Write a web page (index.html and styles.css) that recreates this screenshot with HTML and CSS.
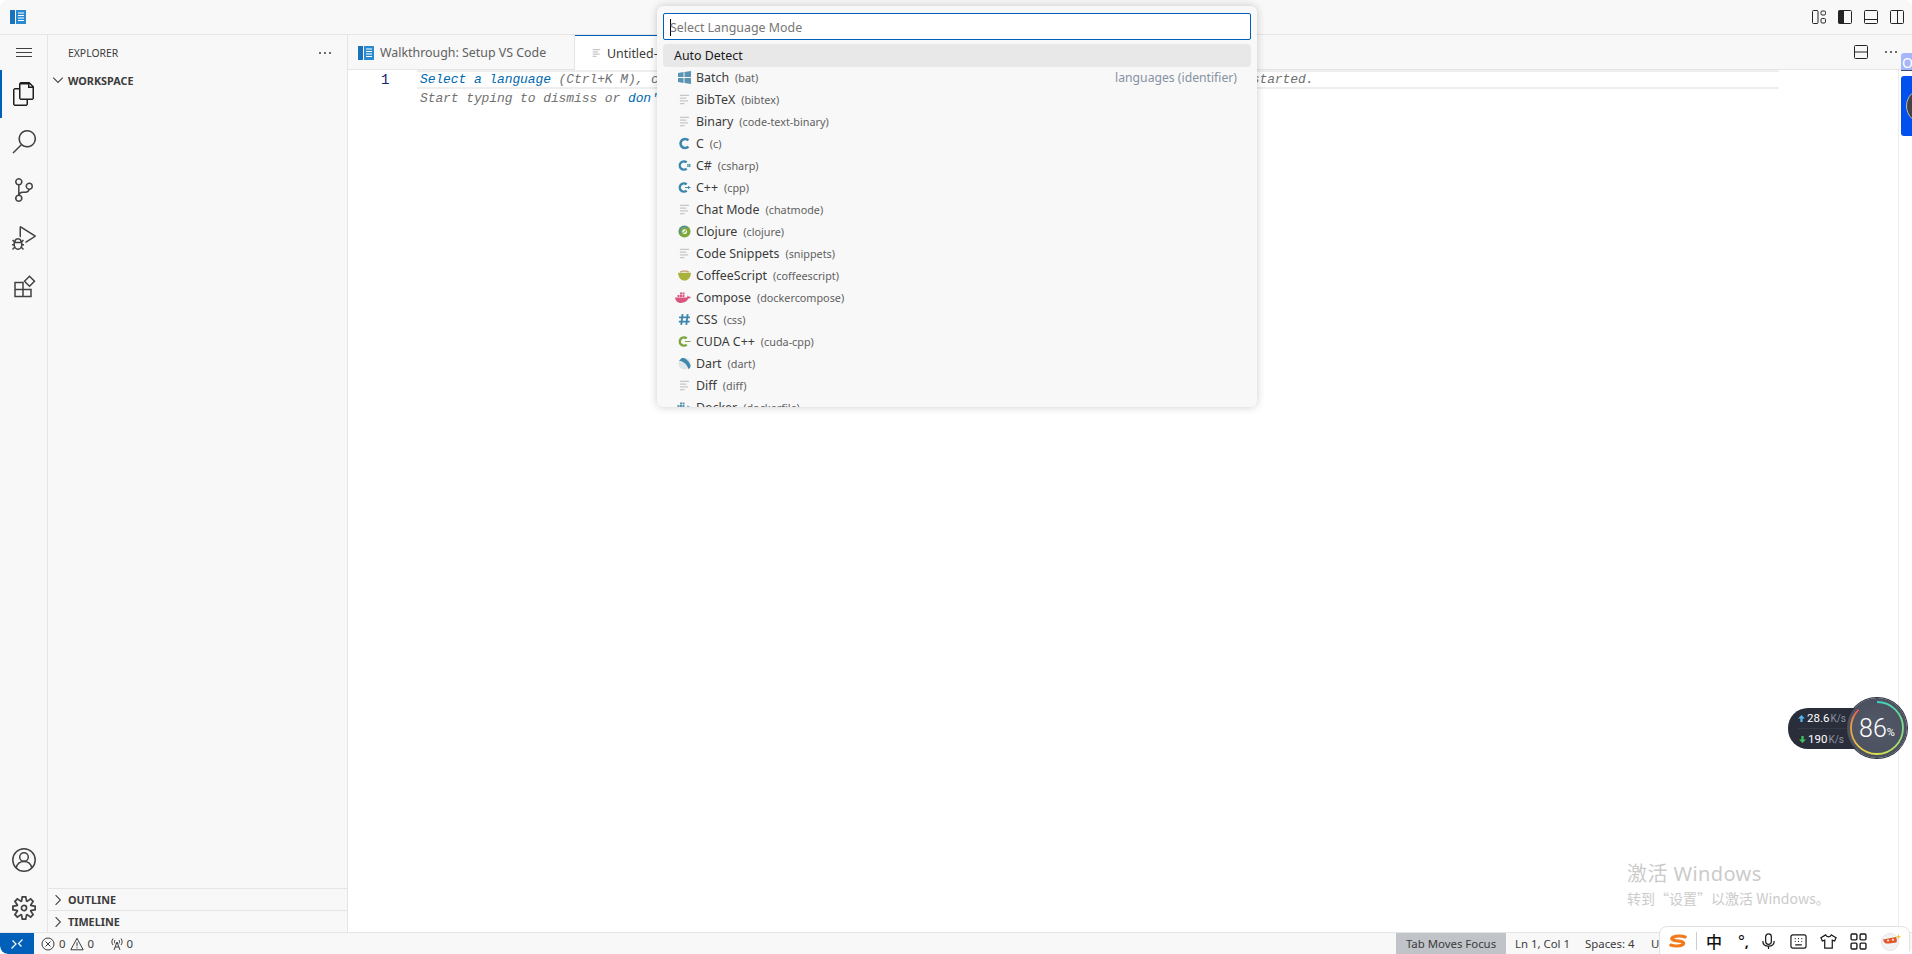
FILE: index.html
```html
<!DOCTYPE html>
<html lang="en">
<head>
<meta charset="utf-8">
<title>Walkthrough: Setup VS Code</title>
<link rel="stylesheet" href="styles.css">
</head>
<body>
<svg class="sprite" aria-hidden="true">
  <symbol id="book" viewBox="0 0 16 14"><rect x="0" y="0" width="5" height="14" fill="#1a73ba"/><rect x="6" y="0" width="10" height="14" fill="#2b8ad0"/><path d="M8 3h6M8 5.5h6M8 8h6M8 10.5h6" stroke="#fff" stroke-width="1"/></symbol>
  <symbol id="doc" viewBox="0 0 12 12"><path d="M1 1.5h10M1 4.5h7M1 7.5h9M1 10.5h5" stroke="#c6c6c6" stroke-width="1.4" fill="none"/></symbol>
  <symbol id="win" viewBox="0 0 14 14"><path d="M0 2.2l6-1v5.3H0zM7 1l7-1v6.5H7zM0 7.5h6v5.3l-6-1zM7 7.5h7V14l-7-1z" fill="#5a93b3"/></symbol>
  <symbol id="c" viewBox="0 0 12 12"><path d="M9.6 3.1A4.2 4.2 0 1 0 9.6 8.9" stroke="#3d87ac" stroke-width="2.4" fill="none"/></symbol>
  <symbol id="cs" viewBox="0 0 12 12"><path d="M8 3.2A3.8 3.8 0 1 0 8 8.8" stroke="#3d87ac" stroke-width="2.2" fill="none"/><path d="M9.2 4.500v3M10.700 4.500v3M8.300 5.300h3.400M8.300 6.800h3.400" stroke="#3d87ac" stroke-width=".7"/></symbol>
  <symbol id="cpp" viewBox="0 0 12 12"><path d="M8 3.200A3.800 3.800 0 1 0 8 8.800" stroke="#3d87ac" stroke-width="2.2" fill="none"/><path d="M6.500 6h5.100M9.800 4.600v2.800" stroke="#3d87ac" stroke-width=".9"/></symbol>
  <symbol id="cuda" viewBox="0 0 12 12"><path d="M8 3.200A3.800 3.800 0 1 0 8 8.800" stroke="#79a63a" stroke-width="2.2" fill="none"/><path d="M6.500 6h5.100" stroke="#79a63a" stroke-width=".9"/></symbol>
  <symbol id="clj" viewBox="0 0 12 12"><circle cx="6" cy="6" r="5.600" fill="#7fa83a"/><path d="M2.400 8A4.200 4.200 0 0 1 8.800 2.600" stroke="#4f8fb0" stroke-width="1.500" fill="none"/><circle cx="6.200" cy="6.200" r="2.300" fill="#eef3e2"/><path d="M5 7.500C6 6.500 6.500 5.500 7.500 5" stroke="#7fa83a" stroke-width="1"/></symbol>
  <symbol id="coffee" viewBox="0 0 12 10"><path d="M0 2.400h12C11.600 6.800 9.600 9.600 6 9.600S.4 6.800 0 2.400z" fill="#a9b23a"/><path d="M2 2C3 .4 9 .4 10 2" stroke="#c8a878" stroke-width="1.400" fill="none"/></symbol>
  <symbol id="whale" viewBox="0 0 16 11"><path d="M0 5.500h11.500c.8-.2 1-1.200 1-2 .9.200 1.300.800 1.500 1.400.7-.2 1.300-.1 2 .2-.6 1.200-1.600 1.500-2.600 1.500C12 9.500 9.500 11 6 11 2.500 11 .5 8.800 0 5.500z" fill="#d9567f"/><path d="M2.500 3h2v2h-2zM5 3h2v2H5zM7.500 3h2v2h-2zM5 .6h2v2H5zM7.500.6h2v2h-2z" fill="#d9567f"/></symbol>
  <symbol id="hash" viewBox="0 0 12 12"><path d="M4.200 1L3 11M8.900 1L7.700 11M1 4h10M.8 8h10" stroke="#3d87ac" stroke-width="1.700" fill="none"/></symbol>
  <symbol id="dart" viewBox="0 0 12 12"><circle cx="6" cy="6" r="5.600" fill="#dfe6ea"/><path d="M1 3.500L3.500 1C6 .8 9 2 11.600 7.500 11.800 9 11 10.500 9.800 11.200 8 6.500 5 3.800 1 3.500z" fill="#3f87ad"/></symbol>
  <symbol id="docker" viewBox="0 0 16 11"><path d="M0 5.500h11.500c.8-.2 1-1.200 1-2 .9.200 1.300.800 1.500 1.400.7-.2 1.300-.1 2 .2-.6 1.200-1.600 1.500-2.600 1.500C12 9.500 9.500 11 6 11 2.500 11 .5 8.800 0 5.500z" fill="#5a93b3"/><path d="M2.500 3h2v2h-2zM5 3h2v2H5zM7.500 3h2v2h-2zM5 .6h2v2H5zM7.500.6h2v2h-2z" fill="#5a93b3"/></symbol>
</svg>

<div class="app">
  <header class="titlebar">
    <svg class="logo"><use href="#book"/></svg>
    <div class="layout-icons">
      <svg class="tb-icon" viewBox="0 0 14 14"><rect x=".5" y=".5" width="5.500" height="13" rx="1"/><rect x="9" y="1" width="4.500" height="4" rx="1.200"/><rect x="9" y="8.500" width="4.500" height="4.500" rx="1.200"/></svg>
      <svg class="tb-icon" viewBox="0 0 14 14"><rect x=".5" y=".5" width="13" height="13" rx="1"/><rect x=".5" y=".5" width="5.500" height="13" fill="#242424" stroke="none"/></svg>
      <svg class="tb-icon" viewBox="0 0 14 14"><rect x=".5" y=".5" width="13" height="13" rx="1"/><path d="M.5 9.500h13"/></svg>
      <svg class="tb-icon" viewBox="0 0 14 14"><rect x=".5" y=".5" width="13" height="13" rx="1"/><path d="M7.500.5v13"/></svg>
    </div>
  </header>

  <div class="workbench">
    <nav class="activitybar">
      <div class="burger"><span></span><span></span><span></span></div>
      <div class="act act-active"><svg viewBox="0 0 24 24"><path d="M17.500 0h-9L7 1.500V6H2.500L1 7.500v15.070L2.500 24h12.070L16 22.570V18h4.700l1.300-1.430V4.500L17.500 0zm0 2.120l2.380 2.380H17.500V2.120zm-3 20.380h-12v-15H7v9.070L8.500 18h6v4.500zm6-6h-12v-14H16V6h4.500v10.500z"/></svg></div>
      <div class="act"><svg viewBox="0 0 24 24"><path d="M15.250 0a8.750 8.750 0 0 0-6.695 14.384L.5 22.439 1.561 23.500l8.055-8.055A8.750 8.750 0 1 0 15.250 0zm0 16a7.250 7.250 0 1 1 0-14.500 7.250 7.250 0 0 1 0 14.500z"/></svg></div>
      <div class="act"><svg viewBox="0 0 24 24"><path d="M21.007 8.222A3.738 3.738 0 0 0 15.045 5.200a3.737 3.737 0 0 0 1.156 6.583 2.988 2.988 0 0 1-2.668 1.670h-2.990a4.456 4.456 0 0 0-2.989 1.165V7.400a3.737 3.737 0 1 0-1.494 0v9.117a3.776 3.776 0 1 0 1.816.099 2.990 2.990 0 0 1 2.668-1.667h2.990a4.484 4.484 0 0 0 4.223-3.039 3.736 3.736 0 0 0 3.250-3.687zM4.565 3.738a2.242 2.242 0 1 1 4.484 0 2.242 2.242 0 0 1-4.484 0zm4.484 16.441a2.242 2.242 0 1 1-4.484 0 2.242 2.242 0 0 1 4.484 0zm8.221-9.715a2.242 2.242 0 1 1 0-4.485 2.242 2.242 0 0 1 0 4.485z"/></svg></div>
      <div class="act"><svg viewBox="0 0 24 24"><path d="M10.940 13.500l-1.320 1.320a3.730 3.730 0 0 0-7.240 0L1.060 13.500 0 14.560l1.720 1.720-.22.220V18H0v1.500h1.500v.08c.077.489.214.966.41 1.420L0 22.940 1.060 24l1.650-1.650A4.308 4.308 0 0 0 6 24a4.310 4.310 0 0 0 3.290-1.650L10.940 24 12 22.940 10.090 21c.198-.464.336-.951.41-1.450v-.1H12V18h-1.500v-1.500l-.22-.22L12 14.560l-1.060-1.060zM6 13.500a2.250 2.250 0 0 1 2.250 2.250h-4.500A2.250 2.250 0 0 1 6 13.500zm3 6a3.330 3.330 0 0 1-3 3 3.330 3.330 0 0 1-3-3v-2.250h6v2.250zm14.760-9.900v1.260L13.500 17.370v-1.760l8.500-5.370L9 2v9.460a5.070 5.070 0 0 0-1.500-.72V.63L8.640 0l15.120 9.600z"/></svg></div>
      <div class="act"><svg class="stroke" viewBox="0 0 24 24"><path d="M3 8.500h8v14H3zM3 15.500h16v7h-8M11 15.500v-7M19 15.500v7"/><path d="M17.500 2.200l5 5-5 5-5-5z"/></svg></div>
      <div class="act-spacer"></div>
      <div class="act"><svg class="stroke" viewBox="0 0 24 24"><circle cx="12" cy="12" r="11.200"/><circle cx="12" cy="9" r="4.300"/><path d="M4.200 20c.8-4 4-6.500 7.800-6.500s7 2.500 7.800 6.500"/></svg></div>
      <div class="act"><svg viewBox="0 0 24 24"><path d="M19.850 8.750l4.150.83v4.840l-4.150.83 2.350 3.520-3.430 3.430-3.520-2.350-.83 4.150H9.580l-.83-4.150-3.520 2.350-3.430-3.430 2.350-3.520L0 14.420V9.580l4.150-.83L1.800 5.230 5.230 1.800l3.520 2.350L9.580 0h4.840l.83 4.150 3.520-2.350 3.430 3.430-2.350 3.520zm-1.570 5.070l4-.81v-2l-4-.81-.54-1.300 2.290-3.430-1.430-1.430-3.430 2.290-1.300-.54-.81-4h-2l-.81 4-1.300.54-3.430-2.290-1.430 1.430L6.380 8.900l-.54 1.300-4 .81v2l4 .81.54 1.300-2.290 3.430 1.430 1.430 3.430-2.290 1.300.54.81 4h2l.81-4 1.300-.54 3.430 2.290 1.430-1.430-2.290-3.430.54-1.300zm-8.186-4.672A3.430 3.430 0 0 1 12 8.570 3.440 3.440 0 0 1 15.430 12a3.430 3.430 0 1 1-5.336-2.852zm.956 4.274c.281.188.612.288.95.288A1.700 1.700 0 0 0 13.710 12a1.710 1.710 0 1 0-2.660 1.422z"/></svg></div>
    </nav>

    <aside class="sidebar">
      <div class="side-title"><span>EXPLORER</span><span class="dots"><i></i><i></i><i></i></span></div>
      <div class="section sec-open"><svg class="chev" viewBox="0 0 10 10"><path d="M1 3l4 4 4-4"/></svg><b>WORKSPACE</b></div>
      <div class="side-fill"></div>
      <div class="section sec-line"><svg class="chev" viewBox="0 0 10 10"><path d="M3 1l4 4-4 4"/></svg><b>OUTLINE</b></div>
      <div class="section sec-line"><svg class="chev" viewBox="0 0 10 10"><path d="M3 1l4 4-4 4"/></svg><b>TIMELINE</b></div>
    </aside>

    <main class="main">
      <div class="tabs">
        <div class="tab tab-walk"><svg class="tab-book"><use href="#book"/></svg>Walkthrough: Setup VS Code</div>
        <div class="tab tab-active"><svg class="tab-doc"><use href="#doc"/></svg>Untitled-1</div>
        <div class="tabs-fill"></div>
        <div class="tab-actions">
          <svg class="tb-icon" viewBox="0 0 14 14"><rect x=".5" y=".5" width="13" height="13" rx="1"/><path d="M.5 7h13"/></svg>
          <span class="dots"><i></i><i></i><i></i></span>
        </div>
      </div>
      <div class="editor">
        <div class="gutter"><div class="ln">1</div></div>
        <div class="code">
          <div class="line line-cur"><span class="link">Select a language</span> (Ctrl+K M), create a file from template (Ctrl+Shift+T), or open a different editor to get started.</div>
          <div class="line">Start typing to dismiss or <span class="link">don't show</span> this again.</div>
        </div>
        <div class="minimap"></div>
      </div>
    </main>
  </div>

  <footer class="statusbar">
    <div class="remote"><svg viewBox="0 0 14 14"><path d="M1.500 11.500L6 7 2.500 3.500M12.500 2.500L8.500 6.500l3 3"/></svg></div>
    <div class="st-item st-problems">
      <svg class="st-ic" viewBox="0 0 14 14"><circle cx="7" cy="7" r="6"/><path d="M4.500 4.500l5 5M9.500 4.500l-5 5"/></svg><span>0</span>
      <svg class="st-ic" viewBox="0 0 14 14"><path d="M7 1.300L13.200 12.800H.8zM7 5.300v4M7 10.200v1.200"/></svg><span>0</span>
    </div>
    <div class="st-item st-ports">
      <svg class="st-ic" viewBox="0 0 14 14"><path d="M7 5L4 13M7 5l3 8M5 10h4M3 1.500C1.500 3.500 1.500 6 3 8M11 1.500c1.500 2 1.500 4.500 0 6.500M5 3c-.7 1-.7 2.500 0 3.500M9 3c.7 1 .7 2.500 0 3.500"/></svg><span>0</span>
    </div>
    <div class="st-fill"></div>
    <div class="st-item st-focus">Tab Moves Focus</div>
    <div class="st-item st-ln">Ln 1, Col 1</div>
    <div class="st-item st-sp">Spaces: 4</div>
    <div class="st-item st-enc">UTF-8</div>
  </footer>

  <div class="quickpick">
    <div class="qp-input"><span class="caret"></span>Select Language Mode</div>
    <div class="qp-list">
      <div class="qp-row qp-auto">Auto Detect</div>
      <div class="qp-row"><svg class="qi"><use href="#win"/></svg><span class="qp-label">Batch</span><span class="qp-desc">(bat)</span><span class="qp-side">languages (identifier)</span></div>
      <div class="qp-row"><svg class="qi qi-doc"><use href="#doc"/></svg><span class="qp-label">BibTeX</span><span class="qp-desc">(bibtex)</span></div>
      <div class="qp-row"><svg class="qi qi-doc"><use href="#doc"/></svg><span class="qp-label">Binary</span><span class="qp-desc">(code-text-binary)</span></div>
      <div class="qp-row"><svg class="qi"><use href="#c"/></svg><span class="qp-label">C</span><span class="qp-desc">(c)</span></div>
      <div class="qp-row"><svg class="qi"><use href="#cs"/></svg><span class="qp-label">C#</span><span class="qp-desc">(csharp)</span></div>
      <div class="qp-row"><svg class="qi"><use href="#cpp"/></svg><span class="qp-label">C++</span><span class="qp-desc">(cpp)</span></div>
      <div class="qp-row"><svg class="qi qi-doc"><use href="#doc"/></svg><span class="qp-label">Chat Mode</span><span class="qp-desc">(chatmode)</span></div>
      <div class="qp-row"><svg class="qi"><use href="#clj"/></svg><span class="qp-label">Clojure</span><span class="qp-desc">(clojure)</span></div>
      <div class="qp-row"><svg class="qi qi-doc"><use href="#doc"/></svg><span class="qp-label">Code Snippets</span><span class="qp-desc">(snippets)</span></div>
      <div class="qp-row"><svg class="qi"><use href="#coffee"/></svg><span class="qp-label">CoffeeScript</span><span class="qp-desc">(coffeescript)</span></div>
      <div class="qp-row"><svg class="qi qi-wide"><use href="#whale"/></svg><span class="qp-label">Compose</span><span class="qp-desc">(dockercompose)</span></div>
      <div class="qp-row"><svg class="qi"><use href="#hash"/></svg><span class="qp-label">CSS</span><span class="qp-desc">(css)</span></div>
      <div class="qp-row"><svg class="qi"><use href="#cuda"/></svg><span class="qp-label">CUDA C++</span><span class="qp-desc">(cuda-cpp)</span></div>
      <div class="qp-row"><svg class="qi"><use href="#dart"/></svg><span class="qp-label">Dart</span><span class="qp-desc">(dart)</span></div>
      <div class="qp-row"><svg class="qi qi-doc"><use href="#doc"/></svg><span class="qp-label">Diff</span><span class="qp-desc">(diff)</span></div>
      <div class="qp-row"><svg class="qi qi-wide"><use href="#docker"/></svg><span class="qp-label">Docker</span><span class="qp-desc">(dockerfile)</span></div>
    </div>
  </div>

  <div class="side-widget">
    <div class="sw-top">O</div>
    <div class="sw-blue"><span class="sw-disc"></span></div>
  </div>

  <div class="net">
    <div class="net-pill">
      <div class="net-row"><svg class="net-ar" viewBox="0 0 8 8"><path d="M4 0l4 4H5.300v4H2.700V4H0z" fill="#4fb4ef"/></svg><span class="net-val">28.6</span><span class="net-unit">K/s</span></div>
      <div class="net-row net-row-down"><svg class="net-ar" viewBox="0 0 8 8"><path d="M4 8L0 4h2.700V0h2.600v4H8z" fill="#3fc05a"/></svg><span class="net-val">190</span><span class="net-unit">K/s</span></div>
    </div>
    <div class="net-dial">
      <svg class="net-ring" viewBox="0 0 60 60">
        <defs>
          <linearGradient id="g1" x1="0" y1="0" x2="1" y2="1"><stop offset="0" stop-color="#39d3c0"/><stop offset="1" stop-color="#7fdc8a"/></linearGradient>
          <linearGradient id="g2" x1="1" y1="0" x2="0" y2="1"><stop offset="0" stop-color="#7fdc8a"/><stop offset="1" stop-color="#dbe04e"/></linearGradient>
          <linearGradient id="g3" x1="1" y1="1" x2="0" y2="0"><stop offset="0" stop-color="#dbe04e"/><stop offset="1" stop-color="#f0a33c"/></linearGradient>
          <linearGradient id="g4" x1="0" y1="1" x2="1" y2="0"><stop offset="0" stop-color="#f0a33c"/><stop offset="1" stop-color="#e8505a"/></linearGradient>
        </defs>
        <path d="M30 4A26 26 0 0 1 56 30" fill="none" stroke="url(#g1)" stroke-width="1.800"/>
        <path d="M56 30A26 26 0 0 1 30 56" fill="none" stroke="url(#g2)" stroke-width="1.800"/>
        <path d="M30 56A26 26 0 0 1 4 30" fill="none" stroke="url(#g3)" stroke-width="1.800"/>
        <path d="M4 30A26 26 0 0 1 11.600 11.600" fill="none" stroke="url(#g4)" stroke-width="1.800"/>
      </svg>
      <span class="net-num">86</span><span class="net-pct">%</span>
    </div>
  </div>

  <div class="watermark">
    <div class="wm-1">激活 Windows</div>
    <div class="wm-2">转到“设置”以激活 Windows。</div>
  </div>

  <div class="ime">
    <svg class="ime-s" viewBox="0 0 20 14"><path d="M18 2.500C14 1 6 1 3.500 3.500 1.500 6 8 7 11 7.200 15 7.500 17.500 9 15.500 11 13 13 6 13 2 11.500" fill="none" stroke="#f27a1a" stroke-width="3.500" stroke-linecap="round"/></svg>
    <span class="ime-sep"></span>
    <span class="ime-zh">中</span>
    <span class="ime-dot">°<b>,</b></span>
    <svg class="ime-ic" viewBox="0 0 16 18"><rect x="5" y="1" width="6" height="11" rx="3"/><path d="M2 8.500c0 3.500 2.500 5.500 6 5.500s6-2 6-5.500M8 14v3"/></svg>
    <svg class="ime-ic" viewBox="0 0 18 16"><rect x="1" y="1" width="16" height="14" rx="2"/><path d="M5 5h1M8.500 5h1M12 5h1M5 8h1M8.500 8h1M12 8h1M5.500 11.500h7"/></svg>
    <svg class="ime-ic" viewBox="0 0 18 16"><path d="M6 1L1 4l1.500 3.500L5 6.500V15h8V6.500l2.500 1L17 4l-5-3c-.5 1.500-1.500 2-3 2S6.500 2.500 6 1z"/></svg>
    <svg class="ime-ic" viewBox="0 0 16 16"><rect x="1" y="1" width="5.500" height="5.500" rx="1"/><rect x="9.500" y="1" width="5.500" height="5.500" rx="1"/><rect x="1" y="9.500" width="5.500" height="5.500" rx="1"/><rect x="9.500" y="9.500" width="5.500" height="5.500" rx="1"/></svg>
    <svg class="ime-av" viewBox="0 0 22 20"><circle cx="10" cy="11" r="8.500" fill="#f3f3f3" stroke="#e5e5e5"/><path d="M3 8.500l13-2.500c1 2 1 4 .5 5.500L9 12.500C6 13 4 12 3 8.500z" fill="#e2572b"/><circle cx="8" cy="9.500" r="1" fill="#fff"/><circle cx="13" cy="8.800" r="1" fill="#fff"/><path d="M18.500 3l.8 2 2 .7-2 .8-.8 2-.8-2-2-.8 2-.7z" fill="#f5c842"/></svg>
  </div>
</div>
</body>
</html>
```

FILE: styles.css
```css
* { box-sizing: border-box; }
html, body { margin: 0; padding: 0; height: 100%; overflow: hidden; background: #fff; }
body { font-family: "Noto Sans", "Noto Sans CJK SC", sans-serif; font-size: 12.4px; color: #3b3b3b; }
.sprite { position: absolute; width: 0; height: 0; }
.app { position: relative; width: 1912px; height: 954px; display: flex; flex-direction: column; overflow: hidden; border-radius: 8px; background: #f8f8f8; }

.titlebar { height: 35px; flex: none; display: flex; align-items: center; padding: 0 8px 1px 10px; background: #f8f8f8; border-bottom: 1px solid #e5e5e5; }
.logo { width: 16px; height: 14px; }
.layout-icons { margin-left: auto; display: flex; gap: 12px; }
.tb-icon { width: 14px; height: 14px; fill: none; stroke: #242424; stroke-width: 1; display: block; }

.workbench { flex: 1; min-height: 0; display: flex; }
.activitybar { width: 48px; flex: none; display: flex; flex-direction: column; border-right: 1px solid #e5e5e5; background: #f8f8f8; }
.burger { height: 35px; display: flex; flex-direction: column; justify-content: center; align-items: center; gap: 3px; }
.burger span { width: 16px; height: 1px; background: #424242; }
.act { height: 48px; flex: none; display: flex; align-items: center; justify-content: center; padding-left: 1px; }
.act svg { width: 24px; height: 24px; fill: #424242; }
.act svg.stroke { fill: none; stroke: #424242; stroke-width: 1.500; }
.act-active { box-shadow: inset 2px 0 0 #005fb8; }
.act-active svg { fill: #1f1f1f; }
.act-spacer { flex: 1; }

.sidebar { width: 300px; flex: none; display: flex; flex-direction: column; border-right: 1px solid #e5e5e5; background: #f8f8f8; }
.side-title { height: 35px; flex: none; display: flex; align-items: center; justify-content: space-between; padding: 0 16px 0 20px; font-size: 10.400px; color: #3b3b3b; }
.dots { display: flex; gap: 3px; }
.dots i { width: 2px; height: 2px; border-radius: 50%; background: #3b3b3b; }
.section { height: 22px; flex: none; display: flex; align-items: center; font-size: 10.800px; color: #3b3b3b; padding-left: 4px; gap: 4px; }
.sec-open { padding-bottom: 2px; }
.section b { font-weight: 700; }
.sec-line { border-top: 1px solid #e5e5e5; }
.chev { width: 12px; height: 12px; fill: none; stroke: #424242; stroke-width: .9; }
.side-fill { flex: 1; }

.main { flex: 1; min-width: 0; display: flex; flex-direction: column; background: #fff; }
.tabs { height: 35px; flex: none; display: flex; background: #f8f8f8; border-bottom: 1px solid #e5e5e5; }
.tab { display: flex; align-items: center; height: 35px; white-space: nowrap; }
.tab-walk { width: 227px; padding-left: 10px; gap: 6px; color: #616161; border-right: 1px solid #e5e5e5; }
.tab-book { width: 16px; height: 14px; }
.tab-active { width: 190px; padding-left: 17px; gap: 6px; background: #fff; color: #3b3b3b; border-top: 1px solid #005fb8; }
.tab-doc { width: 9px; height: 10px; }
.tabs-fill { flex: 1; }
.tab-actions { display: flex; align-items: center; gap: 17px; padding-right: 15px; }

.editor { flex: 1; min-height: 0; display: flex; font-family: "Liberation Mono", monospace; font-size: 13px; letter-spacing: -.1px; }
.gutter { width: 69px; flex: none; }
.ln { height: 19px; line-height: 19px; color: #0b216f; padding-left: 33px; margin-top: 1px; font-size: 14px; }
.code { width: 1362px; flex: none; font-style: italic; color: #717171; }
.line { height: 19px; line-height: 19px; padding-left: 3px; white-space: pre; }
.line-cur { border: solid #eee; border-width: 2px 0; line-height: 15px; }
.link { color: #006ab1; }
.minimap { flex: 1; margin-right: 13px; border-right: 1px solid #eee; }

.statusbar { height: 22px; flex: none; display: flex; align-items: center; background: #f8f8f8; border-top: 1px solid #e5e5e5; font-size: 11.400px; color: #3b3b3b; }
.remote { width: 34px; height: 21px; flex: none; background: #005fb8; border-radius: 0 0 0 8px; display: flex; align-items: center; justify-content: center; }
.remote svg { width: 14px; height: 14px; fill: none; stroke: #fff; stroke-width: 1.200; }
.st-item { display: flex; align-items: center; height: 21px; white-space: nowrap; }
.st-problems { margin-left: 7px; gap: 4px; }
.st-ports { margin-left: 15.500px; gap: 3px; }
.st-ic { width: 14px; height: 14px; fill: none; stroke: #3b3b3b; stroke-width: 1; }
.st-fill { flex: 1; }
.st-focus { background: #c0c3c8; padding: 0 10px; width: 110px; justify-content: center; }
.st-ln { margin-left: 9px; width: 70px; }
.st-sp { width: 66px; }
.st-enc { width: 261px; }

.quickpick { position: absolute; left: 657px; top: 6px; width: 600px; height: 401px; background: #f8f8f8; border-radius: 6px; box-shadow: 0 0 8px rgba(0,0,0,.2); padding: 7px 6px 0; overflow: hidden; }
.qp-input { height: 27px; background: #fff; border: 1px solid #005fb8; border-radius: 2px; display: flex; align-items: center; color: #767676; padding: 1px 0 0 6px; }
.caret { width: 1px; height: 17px; background: #000; margin-right: -1px; }
.qp-list { margin-top: 4px; }
.qp-row { height: 22px; display: flex; align-items: center; padding: 0 0 1px 15px; white-space: nowrap; color: #3b3b3b; }
.qp-auto { height: 23px; padding-left: 11px; background: #e8e8e8; border-radius: 4px; color: #1a1a1a; }
.qi { width: 13px; height: 13px; flex: none; margin-right: 5px; }
.qi-doc { width: 11px; height: 11px; margin-left: 1px; margin-right: 6px; }
.qi-wide { width: 16px; height: 11px; margin-left: -3px; margin-right: 5px; }
.qp-desc { margin-left: 6px; font-size: 10.800px; color: #616161; }
.qp-side { margin-left: auto; padding-right: 14px; color: #8592a3; font-size: 12.200px; }

.side-widget { position: absolute; right: 0; top: 53px; width: 11px; display: flex; flex-direction: column; gap: 5px; }
.sw-top { height: 18px; background: #a5b6fb; border-bottom: 1px solid #3a4a6a; border-radius: 3px 0 0 0; color: #fff; font-size: 14px; line-height: 20px; overflow: hidden; padding-left: 1px; }
.sw-blue { height: 60px; background: #0050ef; border-radius: 3px 0 0 3px; overflow: hidden; position: relative; }
.sw-disc { position: absolute; left: 5px; top: 12px; width: 36px; height: 36px; border-radius: 50%; background: #444; border: 1px solid #bbb; }

.net { position: absolute; left: 1788px; top: 698px; width: 122px; height: 60px; }
.net-pill { position: absolute; left: 0; top: 10px; width: 90px; height: 41px; background: #2a2e3b; border-radius: 20px; padding: 0 0 0 10px; display: flex; flex-direction: column; color: #fff; font-family: Roboto, sans-serif; }
.net-row { height: 21px; flex: none; display: flex; align-items: center; gap: 1px; border-bottom: 1px solid #353a48; }
.net-row-down { height: 20px; border: 0; padding-left: 1px; }
.net-ar { width: 7px; height: 7px; margin-right: 1px; }
.net-val { font-size: 11.500px; }
.net-unit { font-size: 10px; color: #8d93a3; }
.net-dial { position: absolute; left: 59px; top: 0; width: 60px; height: 60px; border-radius: 50%; background: radial-gradient(circle, #535868 0, #4c5160 70%, #3a3e4b 100%); box-shadow: 0 0 0 1px #2a2e3b; display: flex; align-items: center; justify-content: center; color: #fff; font-family: Roboto, sans-serif; }
.net-ring { position: absolute; inset: 0; width: 60px; height: 60px; }
.net-num { font-size: 25px; font-weight: 300; }
.net-pct { font-size: 11px; margin-top: 8px; }

.watermark { position: absolute; left: 1627px; top: 859px; color: #cbcbcb; font-family: "Noto Sans", "Noto Sans CJK SC", sans-serif; }
.wm-1 { font-size: 20px; line-height: 30px; letter-spacing: .4px; }
.wm-2 { font-family: "Noto Sans CJK SC", sans-serif; font-size: 14px; line-height: 19px; }

.ime { position: absolute; left: 1659px; top: 926px; width: 251px; height: 30px; background: #fff; border: 1px solid #e2e2e2; border-radius: 8px 8px 0 0; display: flex; align-items: center; padding-left: 9px; color: #111; }
.ime-s { width: 18px; height: 14px; flex: none; }
.ime-sep { width: 1px; height: 18px; background: #ccc; margin: 0 8px 0 9px; }
.ime-zh { font-family: "Noto Sans CJK SC", sans-serif; font-size: 16px; width: 26px; margin-left: 1px; font-weight: 500; }
.ime-dot { font-size: 16px; width: 28px; padding-left: 6px; line-height: 1; }
.ime-dot b { font-size: 14px; }
.ime-ic { width: 17px; height: 17px; flex: none; margin-right: 13px; fill: none; stroke: #1a1a1a; stroke-width: 1.300; }
.ime-av { width: 22px; height: 20px; flex: none; }
```
